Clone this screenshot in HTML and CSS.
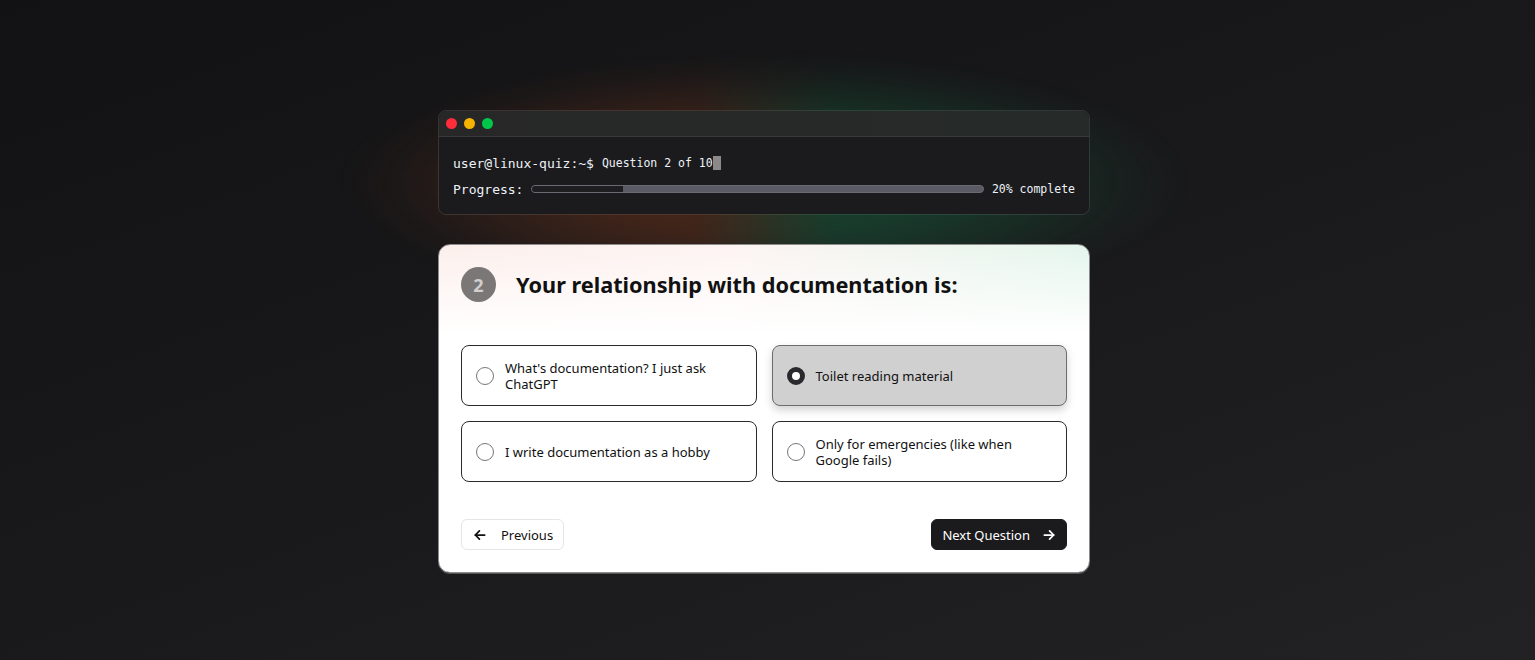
FILE: index.html
```html
<!DOCTYPE html>
<html lang="en">
<head>
<meta charset="utf-8">
<title>Linux Quiz</title>
<link rel="stylesheet" href="styles.css">
</head>
<body>
<main class="page">
  <div class="stack">
    <section class="terminal">
      <div class="glow"></div>
      <div class="term-bar">
        <span class="dot red"></span><span class="dot yellow"></span><span class="dot green"></span>
      </div>
      <div class="term-body">
        <div class="term-line">
          <span class="prompt">user@linux-quiz:~$</span>
          <span class="qcount">Question 2 of 10</span><span class="cursor"></span>
        </div>
        <div class="term-line progress-line">
          <span class="prompt">Progress:</span>
          <div class="bar"><div class="bar-fill" style="width:20%"></div></div>
          <span class="qcount">20% complete</span>
        </div>
      </div>
    </section>

    <section class="card">
      <header class="q-head">
        <span class="q-num">2</span>
        <h1 class="q-title">Your relationship with documentation is:</h1>
      </header>
      <div class="options">
        <label class="option"><span class="radio"></span><span class="opt-text">What's documentation? I just ask ChatGPT</span></label>
        <label class="option selected"><span class="radio"></span><span class="opt-text">Toilet reading material</span></label>
        <label class="option"><span class="radio"></span><span class="opt-text">I write documentation as a hobby</span></label>
        <label class="option"><span class="radio"></span><span class="opt-text">Only for emergencies (like when Google fails)</span></label>
      </div>
      <footer class="nav">
        <button class="btn btn-prev">
          <svg width="14" height="14" viewBox="0 0 24 24" fill="none" stroke="currentColor" stroke-width="3" stroke-linecap="round" stroke-linejoin="round"><path d="M20 12H4"/><path d="M11 5l-7 7 7 7"/></svg>
          <span>Previous</span>
        </button>
        <button class="btn btn-next">
          <span>Next Question</span>
          <svg width="14" height="14" viewBox="0 0 24 24" fill="none" stroke="currentColor" stroke-width="3" stroke-linecap="round" stroke-linejoin="round"><path d="M4 12h16"/><path d="M13 5l7 7-7 7"/></svg>
        </button>
      </footer>
    </section>
  </div>
</main>
</body>
</html>
```

FILE: styles.css
```css
* { box-sizing: border-box; }
html, body { margin: 0; height: 100%; }
body {
  background: linear-gradient(160deg, #121214 0%, #19191b 50%, #222224 100%);
  font-family: "Noto Sans", "Open Sans", sans-serif;
  overflow: hidden;
}
.page {
  display: flex;
  justify-content: center;
  padding-top: 110px;
  padding-right: 7px;
  height: 660px;
}
.stack {
  width: 652px;
  display: flex;
  flex-direction: column;
  gap: 29px;
}
.terminal {
  position: relative;
  z-index: 0;
  background: #1b1b1d;
  border: 1px solid #333336;
  border-radius: 8px;
  height: 105px;
}
.glow {
  position: absolute;
  left: -100px;
  right: -100px;
  top: -90px;
  bottom: -100px;
  background: linear-gradient(90deg, rgba(135,60,25,0.6) 0%, rgba(120,55,28,0.55) 42%, rgba(25,115,70,0.5) 58%, rgba(25,120,75,0.55) 100%);
  -webkit-mask-image: radial-gradient(ellipse closest-side at 50% 55%, #000 0%, rgba(0,0,0,0.75) 40%, rgba(0,0,0,0.4) 65%, rgba(0,0,0,0.15) 83%, rgba(0,0,0,0.04) 94%, transparent 100%);
  mask-image: radial-gradient(ellipse closest-side at 50% 55%, #000 0%, rgba(0,0,0,0.75) 40%, rgba(0,0,0,0.4) 65%, rgba(0,0,0,0.15) 83%, rgba(0,0,0,0.04) 94%, transparent 100%);
  z-index: -1;
  pointer-events: none;
}
.term-bar {
  height: 26px;
  background: linear-gradient(90deg, #272727, #262b29);
  border-bottom: 1px solid #3a3a3d;
  border-radius: 8px 8px 0 0;
  display: flex;
  align-items: center;
  gap: 7px;
  padding-left: 7px;
}
.dot { width: 11px; height: 11px; border-radius: 50%; display: block; }
.red { background: #ff2d3a; }
.yellow { background: #f5b400; }
.green { background: #00c74a; }
.term-body {
  padding: 18px 14px 0 14px;
  display: flex;
  flex-direction: column;
  gap: 10px;
  font-family: "DejaVu Sans Mono", "Liberation Mono", monospace;
  color: #eef2f8;
  background: #1b1b1d;
  border-radius: 0 0 8px 8px;
  height: 77px;
}
.term-line {
  display: flex;
  align-items: center;
  height: 16px;
  white-space: nowrap;
}
.prompt { font-size: 13px; }
.qcount { font-size: 11.5px; margin-left: 8px; }
.cursor {
  display: inline-block;
  width: 8px;
  height: 14px;
  background: #8a8a8a;
}
.bar {
  flex: 1;
  height: 8px;
  margin-left: 8px;
  border: 1px solid #6a6a72;
  border-radius: 4px;
  background: #5a5a64;
  overflow: hidden;
}
.bar-fill { height: 100%; background: #1e1e21; }

.card {
  position: relative;
  z-index: 1;
  background:
    linear-gradient(180deg, rgba(255,255,255,0) 0%, #fff 90px),
    linear-gradient(90deg, #fcefec 0%, #fdf4f2 45%, #e4f6ec 100%);
  border: 1px solid #8c8c8c;
  border-radius: 12px;
  padding: 22px 22px 22px 22px;
  box-shadow: 0 1px 0 #555;
}
.q-head {
  display: flex;
  align-items: center;
  gap: 20px;
}
.q-num {
  width: 35px;
  height: 35px;
  border-radius: 50%;
  background: #7b7777;
  color: #d0cece;
  font-weight: 700;
  font-size: 18px;
  display: flex;
  align-items: center;
  justify-content: center;
}
.q-title {
  margin: 0;
  font-size: 21.7px;
  font-weight: 700;
  color: #111;
}
.options {
  margin-top: 43px;
  display: grid;
  grid-template-columns: 1fr 1fr;
  gap: 15px;
}
.option {
  height: 61px;
  border: 1px solid #2a2a2a;
  border-radius: 8px;
  background: #fff;
  display: flex;
  align-items: center;
  gap: 11px;
  padding: 0 14px;
  font-size: 13px;
  color: #111;
  line-height: 16px;
}
.option.selected {
  background: #d0d0d0;
  border-color: #6c6c70;
  box-shadow: 0 4px 8px rgba(0,0,0,0.18);
}
.radio {
  flex: none;
  width: 18px;
  height: 18px;
  border-radius: 50%;
  border: 1px solid #777;
  background: #fff;
}
.selected .radio {
  border: 5px solid #2a2a2e;
  background: #fff;
}
.opt-text { max-width: 215px; }
.nav {
  margin-top: 37px;
  display: flex;
  justify-content: space-between;
}
.btn {
  font-family: inherit;
  font-size: 13px;
  height: 31px;
  border-radius: 6px;
  display: flex;
  align-items: center;
  cursor: pointer;
}
.btn-prev {
  background: #fff;
  border: 1px solid #e6e6e6;
  color: #111;
  padding: 0 10px 0 11px;
  gap: 14px;
}
.btn-next {
  background: #1b1b1d;
  border: 1px solid #1b1b1d;
  color: #fff;
  padding: 0 10px 0 10px;
  gap: 12px;
}
```
